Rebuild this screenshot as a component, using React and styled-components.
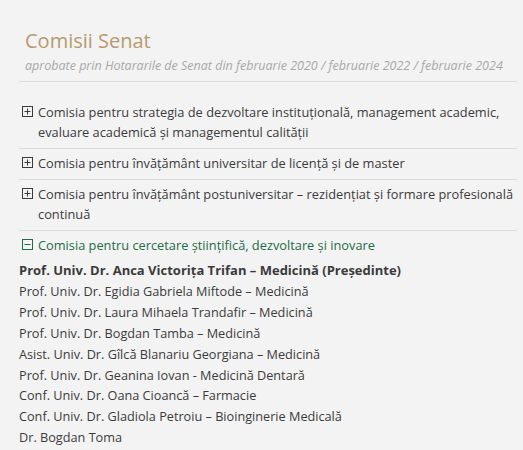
import React, { useState } from 'react'
import styled, { createGlobalStyle } from 'styled-components'

const GlobalStyle = createGlobalStyle`
  body {
    margin: 0;
    background: #f3f3f3;
    font-family: 'Open Sans', 'Liberation Sans', sans-serif;
    color: #3b3b3b;
  }
`

const commissions = [
  'Comisia pentru strategia de dezvoltare instituțională, management academic, evaluare academică și managementul calității',
  'Comisia pentru învățământ universitar de licență și de master',
  'Comisia pentru învățământ postuniversitar – rezidențiat și formare profesională continuă',
  'Comisia pentru cercetare științifică, dezvoltare și inovare'
]

const members = [
  'Prof. Univ. Dr. Anca Victorița Trifan – Medicină (Președinte)',
  'Prof. Univ. Dr. Egidia Gabriela Miftode – Medicină',
  'Prof. Univ. Dr. Laura Mihaela Trandafir – Medicină',
  'Prof. Univ. Dr. Bogdan Tamba – Medicină',
  'Asist. Univ. Dr. Gîlcă Blanariu Georgiana – Medicină',
  'Prof. Univ. Dr. Geanina Iovan - Medicină Dentară',
  'Conf. Univ. Dr. Oana Cioancă – Farmacie',
  'Conf. Univ. Dr. Gladiola Petroiu – Bioinginerie Medicală',
  'Dr. Bogdan Toma'
]

const ToggleIcon = ({ open }) => (
  <StyledIcon viewBox="0 0 11 11" width="11" height="11">
    <rect x="0.5" y="0.5" width="10" height="10" fill="none" stroke="currentColor" strokeWidth="1" />
    <line x1="2.5" y1="5.5" x2="8.5" y2="5.5" stroke="currentColor" strokeWidth="1" />
    {!open && <line x1="5.5" y1="2.5" x2="5.5" y2="8.5" stroke="currentColor" strokeWidth="1" />}
  </StyledIcon>
)

export default function App () {
  const [openIndex, setOpenIndex] = useState(3)

  return (
    <>
      <GlobalStyle />
      <StyledPage>
        <StyledHeader>
          <StyledTitle>Comisii Senat</StyledTitle>
          <StyledSubtitle>
            aprobate prin Hotararile de Senat din februarie 2020 / februarie 2022 / februarie 2024
          </StyledSubtitle>
        </StyledHeader>
        <StyledList>
          {commissions.map((name, i) => (
            <StyledItem key={name} $last={i === commissions.length - 1}>
              <StyledToggle $open={openIndex === i} onClick={() => { setOpenIndex(openIndex === i ? -1 : i) }}>
                <ToggleIcon open={openIndex === i} />
                <span>{name}</span>
              </StyledToggle>
              {openIndex === i && i === 3 && (
                <StyledMembers>
                  {members.map((m, j) => (
                    <StyledMember key={m} $bold={j === 0}>{m}</StyledMember>
                  ))}
                </StyledMembers>
              )}
            </StyledItem>
          ))}
        </StyledList>
      </StyledPage>
    </>
  )
}

const StyledPage = styled.div`
  padding: 29px 6px 0 19px;
`

const StyledHeader = styled.div`
  padding: 0 0 6px 6px;
  border-bottom: 1px solid #dcdcdc;
`

const StyledTitle = styled.h1`
  margin: 0;
  font-size: 20px;
  font-weight: 400;
  line-height: 24px;
  color: #b59b6e;
`

const StyledSubtitle = styled.div`
  margin-top: 4px;
  font-size: 12.5px;
  font-style: italic;
  line-height: 18px;
  color: #a8a8a8;
`

const StyledList = styled.div`
  padding-top: 16px;
`

const StyledItem = styled.div`
  border-bottom: ${({ $last }) => ($last ? 'none' : '1px solid #dcdcdc')};
  padding: 4px 0 6px;
`

const StyledToggle = styled.div`
  display: flex;
  align-items: flex-start;
  gap: 5px;
  padding-left: 3px;
  font-size: 12.8px;
  line-height: 20px;
  cursor: pointer;
  color: ${({ $open }) => ($open ? '#1f6b48' : '#3b3b3b')};
`

const StyledIcon = styled.svg`
  flex: 0 0 auto;
  margin-top: 4px;
`

const StyledMembers = styled.div`
  padding-top: 5px;
`

const StyledMember = styled.div`
  font-size: ${({ $bold }) => ($bold ? '13px' : '12.7px')};
  line-height: 20.9px;
  font-weight: ${({ $bold }) => ($bold ? 700 : 400)};
`
